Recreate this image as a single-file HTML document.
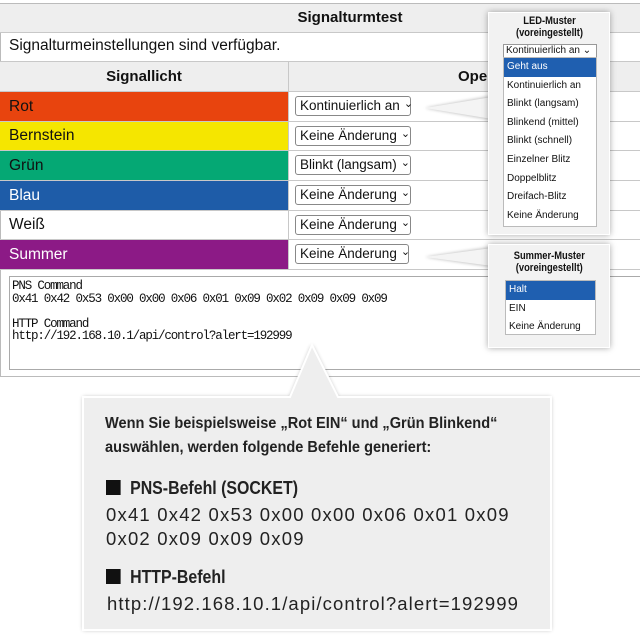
<!DOCTYPE html>
<html><head><meta charset="utf-8"><style>
*{margin:0;padding:0;box-sizing:border-box}
body{width:640px;height:642px;background:#fff;position:relative;overflow:hidden;font-family:"Liberation Sans",Arial,sans-serif;color:#111}
.a{position:absolute}
.row{position:absolute;left:0;width:640px;border-bottom:1px solid #c8c8c8}
.cell{position:absolute;left:0;width:288px;height:100%;font-size:15.5px;padding-left:9px;display:flex;align-items:center}
.sel{position:absolute;left:295px;height:20px;border:1px solid #888;border-radius:3px;background:#fff;font-size:13.5px;padding-left:4px;line-height:18px;white-space:nowrap}
.sel:after{content:"⌄";font-size:11px;margin-left:4px;position:relative;top:-3px}
.pop{position:absolute;background:#f2f2f2;box-shadow:0 0 6px rgba(0,0,0,.35);border:1px solid #fff}
.li{height:18.6px;font-size:10px;padding-left:3px;line-height:18px;white-space:nowrap}
.hl{background:#1f5fb0;color:#fff}
.mono{font-family:"Liberation Mono",monospace;font-size:12.5px;letter-spacing:-1.15px;line-height:12.5px;white-space:pre}
.sx{transform-origin:0 0;white-space:nowrap}
</style></head><body>
<div class="a" style="left:0;top:3px;width:640px;height:374px;border:1px solid #bbb;border-right:none"></div>
<div class="row" style="top:3px;height:30px;background:#eee;border-top:1px solid #bbb"></div>
<div class="a" style="left:0;top:9px;width:700px;text-align:center;font-weight:bold;font-size:15px">Signalturmtest</div>
<div class="row" style="top:33px;height:29px"></div>
<div class="a" style="left:9px;top:37px;font-size:15.5px">Signalturmeinstellungen sind verfügbar.</div>
<div class="row" style="top:62px;height:30px;background:#eee"></div>
<div class="a" style="left:0;top:68px;width:288px;text-align:center;font-weight:bold;font-size:15px">Signallicht</div>
<div class="a" style="left:458px;top:68px;font-weight:bold;font-size:15px">Oper</div>
<div class="a" style="left:288px;top:62px;width:1px;height:208px;background:#c8c8c8"></div>

<div class="row" style="top:92px;height:30px"><div class="cell" style="background:#e8440e">Rot</div><div class="sel" style="top:4px;width:116px">Kontinuierlich an</div></div>
<div class="row" style="top:122px;height:29px"><div class="cell" style="background:#f5e600">Bernstein</div><div class="sel" style="top:4px;width:116px">Keine Änderung</div></div>
<div class="row" style="top:151px;height:30px"><div class="cell" style="background:#05a874">Grün</div><div class="sel" style="top:4px;width:116px">Blinkt (langsam)</div></div>
<div class="row" style="top:181px;height:30px"><div class="cell" style="background:#1e5ca8;color:#fff">Blau</div><div class="sel" style="top:4px;width:116px">Keine Änderung</div></div>
<div class="row" style="top:211px;height:29px"><div class="cell">Weiß</div><div class="sel" style="top:4px;width:116px">Keine Änderung</div></div>
<div class="row" style="top:240px;height:30px"><div class="cell" style="background:#8c1a86;color:#fff">Summer</div><div class="sel" style="top:4px;width:114px">Keine Änderung</div></div>

<div class="a" style="left:9px;top:276px;width:640px;height:94px;border:1px solid #aaa;padding:3px 0 0 2px"><div class="mono">PNS Command
0x41 0x42 0x53 0x00 0x00 0x06 0x01 0x09 0x02 0x09 0x09 0x09

HTTP Command
http://192.168.10.1/api/control?alert=192999</div></div>

<svg class="a" style="left:0;top:0" width="640" height="642">
<defs><filter id="t"><feGaussianBlur stdDeviation="1.5"/></filter></defs>
<polygon points="425,108 492,96 492,120" fill="#000" opacity=".25" filter="url(#t)"/>
<polygon points="425,108 492,97 492,119" fill="#f4f4f4"/>
<polygon points="425,257 492,247 492,267" fill="#000" opacity=".25" filter="url(#t)"/>
<polygon points="425,257 492,248 492,266" fill="#f4f4f4"/>
</svg>

<div class="pop" style="left:488px;top:12px;width:122px;height:223px">
<div class="sx" style="transform:scaleX(.85);position:absolute;left:18px;top:3px;text-align:center;font-weight:bold;font-size:11px;line-height:11.5px;width:100px">LED-Muster<br>(voreingestellt)</div>
<div class="a" style="left:14px;top:31px;width:94px;height:14px;background:#fff;border:1px solid #999;font-size:10px;line-height:12px;padding-left:2px;white-space:nowrap">Kontinuierlich an ⌄</div>
<div class="a" style="left:14px;top:44px;width:94px;height:170px;background:#fff;border:1px solid #bbb">
<div class="li hl">Geht aus</div><div class="li">Kontinuierlich an</div><div class="li">Blinkt (langsam)</div><div class="li">Blinkend (mittel)</div><div class="li">Blinkt (schnell)</div><div class="li">Einzelner Blitz</div><div class="li">Doppelblitz</div><div class="li">Dreifach-Blitz</div><div class="li">Keine Änderung</div>
</div></div>

<div class="pop" style="left:488px;top:244px;width:122px;height:104px">
<div class="sx" style="transform:scaleX(.85);position:absolute;left:11px;top:6px;text-align:center;font-weight:bold;font-size:11px;line-height:11.5px;width:116px">Summer-Muster<br>(voreingestellt)</div>
<div class="a" style="left:16px;top:35px;width:91px;height:55px;background:#fff;border:1px solid #bbb">
<div class="li hl">Halt</div><div class="li">EIN</div><div class="li">Keine Änderung</div>
</div></div>

<svg class="a" style="left:0;top:0" width="640" height="642">
<defs><filter id="s" x="-10%" y="-10%" width="120%" height="120%"><feGaussianBlur stdDeviation="2"/></filter></defs>
<polygon points="83,397 290,397 312,345 338,397 551,397 551,630 83,630" fill="#000" opacity=".3" filter="url(#s)"/>
<polygon points="83,397 290,397 312,345 338,397 551,397 551,630 83,630" fill="#eeeeee" stroke="#fff" stroke-width="2"/>
</svg>
<div class="a sx" style="left:105px;top:412px;font-size:15.5px;font-weight:bold;line-height:24px;color:#222;transform:scaleX(.94)">Wenn Sie beispielsweise „Rot EIN“ und „Grün Blinkend“<br>auswählen, werden folgende Befehle generiert:</div>
<div class="a sx" style="left:106px;top:477px;font-size:18.5px;font-weight:bold;color:#222;transform:scaleX(.86)"><span style="display:inline-block;width:17px;height:15px;background:#111;margin-right:11px;vertical-align:-1px"></span>PNS-Befehl (SOCKET)</div>
<div class="a" style="left:106px;top:503px;font-size:18.5px;line-height:24px;letter-spacing:1.2px;color:#222;white-space:nowrap">0x41 0x42 0x53 0x00 0x00 0x06 0x01 0x09<br>0x02 0x09 0x09 0x09</div>
<div class="a sx" style="left:106px;top:566px;font-size:18.5px;font-weight:bold;color:#222;transform:scaleX(.86)"><span style="display:inline-block;width:17px;height:15px;background:#111;margin-right:11px;vertical-align:-1px"></span>HTTP-Befehl</div>
<div class="a" style="left:107px;top:593px;font-size:18.5px;letter-spacing:1.1px;color:#222;white-space:nowrap">http://192.168.10.1/api/control?alert=192999</div>
</body></html>
